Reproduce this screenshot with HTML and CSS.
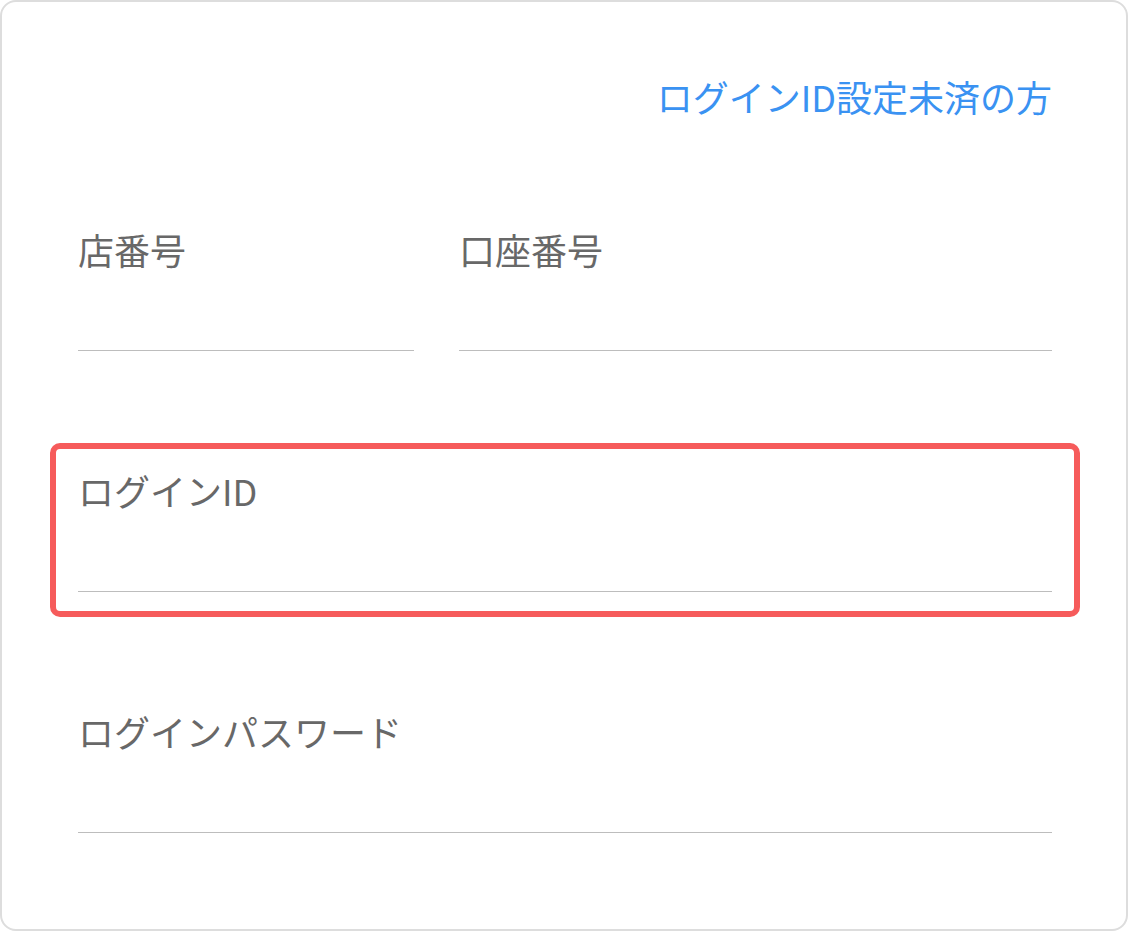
FILE: index.html
```html
<!DOCTYPE html>
<html lang="ja">
<head>
<meta charset="utf-8">
<title>ログイン</title>
<link rel="stylesheet" href="styles.css">
</head>
<body>
<div class="card">
  <div class="link-row"><a class="link" href="#">ログインID設定未済の方</a></div>
  <div class="row">
    <div class="field field-branch">
      <div class="label">店番号</div>
      <div class="input"></div>
    </div>
    <div class="field field-account">
      <div class="label">口座番号</div>
      <div class="input"></div>
    </div>
  </div>
  <div class="field field-highlight">
    <div class="label">ログインID</div>
    <div class="input"></div>
  </div>
  <div class="field">
    <div class="label">ログインパスワード</div>
    <div class="input"></div>
  </div>
</div>
</body>
</html>
```

FILE: styles.css
```css
* { box-sizing: border-box; }
html, body { margin: 0; padding: 0; background: #fff; }
body {
  font-family: "Noto Sans CJK JP", "Noto Sans", sans-serif;
}
.card {
  width: 1128px;
  height: 931px;
  border: 2px solid #dddddd;
  border-radius: 16px;
  background: #fff;
  padding: 70px 74px 0 76px;
  display: flex;
  flex-direction: column;
  gap: 115px;
}
.link-row {
  text-align: right;
  font-size: 36px;
  line-height: 48px;
  margin-bottom: -10px;
}
.link {
  color: #3a92f2;
  text-decoration: none;
}
.row {
  display: flex;
  gap: 45px;
}
.field-branch { width: 336px; flex: none; }
.field-account { flex: 1; }
.field { position: relative; }
.label {
  font-size: 36px;
  line-height: 48px;
  color: #686868;
}
.input {
  height: 78px;
  border-bottom: 1px solid #bdbdbd;
}
.field-highlight::before {
  content: "";
  position: absolute;
  top: -23px;
  bottom: -25px;
  left: -28px;
  right: -28px;
  border: 6px solid #f65b5b;
  border-radius: 10px;
  pointer-events: none;
}
```
